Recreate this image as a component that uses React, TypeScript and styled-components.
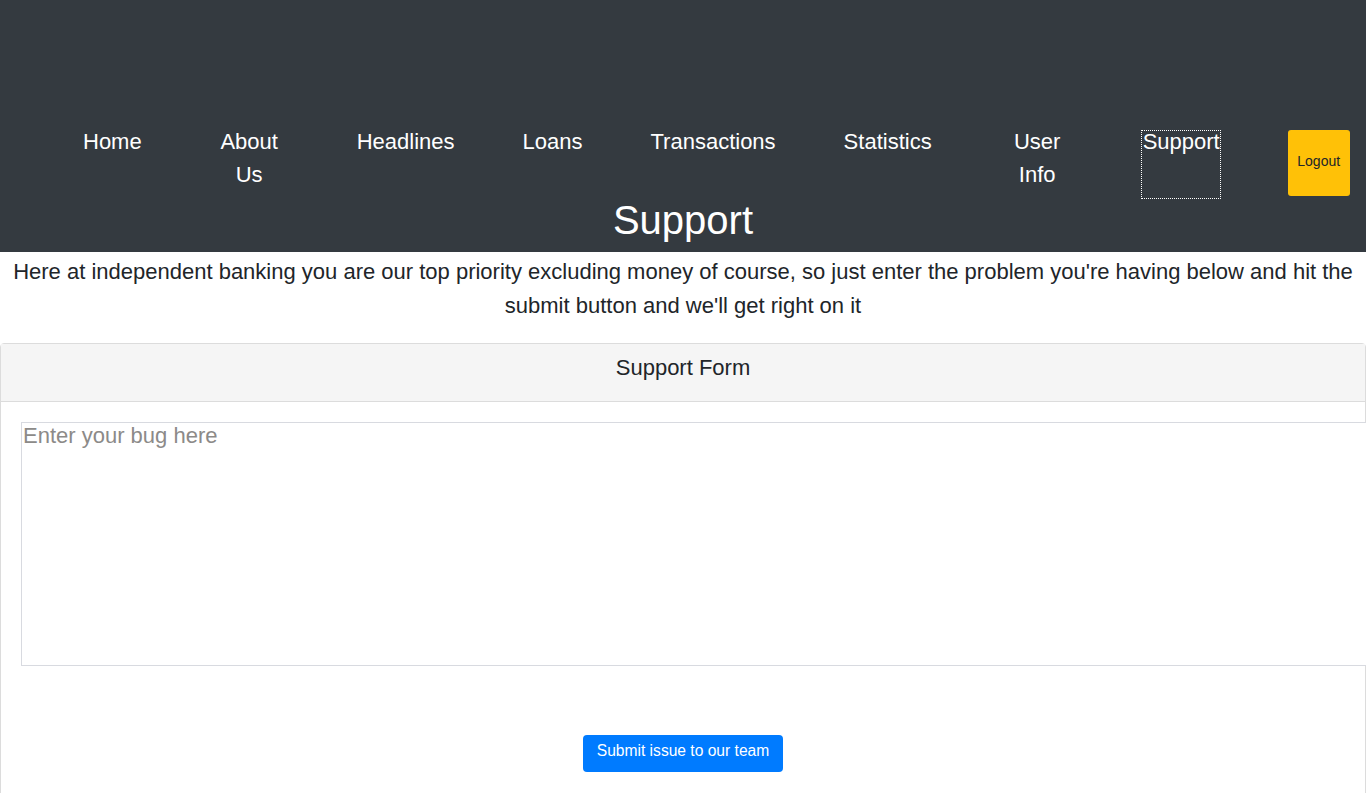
import React from "react";
import styled, { createGlobalStyle } from "styled-components";

const Global = createGlobalStyle`
  html, body { margin: 0; padding: 0; overflow-x: hidden; }
  body {
    font-family: "Liberation Sans", Arial, sans-serif;
    color: #212529;
    background: #fff;
  }
  * { box-sizing: border-box; }
`;

const Header = styled.header`
  background: #343a40;
  color: #fff;
  padding-top: 130px;
`;

const Nav = styled.nav`
  display: flex;
  align-items: flex-start;
  gap: 68px;
  padding-left: 83px;
  height: 66px;
`;

const NavLink = styled.a<{ $w?: number; $focused?: boolean }>`
  position: relative;
  display: block;
  margin-top: -5px;
  width: ${(p) => (p.$w ? `${p.$w}px` : "auto")};
  flex-shrink: 0;
  font-size: 22px;
  line-height: 33px;
  text-align: center;
  color: #fff;
  text-decoration: none;
  white-space: ${(p) => (p.$w ? "normal" : "nowrap")};
  ${(p) =>
    p.$focused &&
    `
    &::after {
      content: "";
      position: absolute;
      left: -2px;
      right: -1px;
      top: 5px;
      height: 67px;
      border: 1px dotted #fff;
    }
  `}
`;

const LogoutButton = styled.button`
  flex-shrink: 0;
  width: 62px;
  height: 66px;
  padding: 0 0 4px;
  background: #ffc107;
  color: #212529;
  border: none;
  border-radius: 3px;
  font-family: inherit;
  font-size: 14px;
`;

const Title = styled.h1`
  margin: 0;
  padding-bottom: 8px;
  font-size: 40px;
  line-height: 48px;
  font-weight: 400;
  text-align: center;
`;

const Intro = styled.p`
  margin: 3px 0 20px;
  padding: 0 8px;
  font-size: 22px;
  line-height: 34px;
  text-align: center;
`;

const Card = styled.section`
  border: 1px solid #dcdcdc;
  border-radius: 4px;
`;

const CardHeader = styled.div`
  background: #f5f5f5;
  border-bottom: 1px solid #dcdcdc;
  padding: 7px 20px 17px;
  font-size: 22px;
  line-height: 33px;
  text-align: center;
`;

const CardBody = styled.div`
  padding: 20px 20px 48px;
  display: flex;
  flex-direction: column;
  align-items: flex-start;
`;

const BugInput = styled.textarea`
  width: 1400px;
  height: 244px;
  margin: 0;
  padding: 0 1px 2px;
  border: 1px solid #d8dae0;
  resize: none;
  font-family: inherit;
  font-size: 22px;
  line-height: 26px;
  color: #212529;
  background: #fff;
  &::placeholder { color: #8c8a88; }
`;

const SubmitButton = styled.button`
  align-self: center;
  margin-top: 69px;
  height: 37px;
  padding: 0 14px 5px;
  background: #007bff;
  color: #fff;
  border: none;
  border-radius: 4px;
  font-family: inherit;
  font-size: 15.6px;
`;

const items: { label: string; w?: number }[] = [
  { label: "Home" },
  { label: "About Us", w: 79 },
  { label: "Headlines" },
  { label: "Loans" },
  { label: "Transactions" },
  { label: "Statistics" },
  { label: "User Info", w: 75 },
  { label: "Support" },
];

export default function App() {
  return (
    <>
      <Global />
      <Header>
        <Nav>
          {items.map((it) => (
            <NavLink key={it.label} href="#" $w={it.w} $focused={it.label === "Support"}>
              {it.label}
            </NavLink>
          ))}
          <LogoutButton>Logout</LogoutButton>
        </Nav>
        <Title>Support</Title>
      </Header>
      <Intro>
        Here at independent banking you are our top priority excluding money of course, so just enter the
        problem you're having below and hit the submit button and we'll get right on it
      </Intro>
      <Card>
        <CardHeader>Support Form</CardHeader>
        <CardBody>
          <BugInput placeholder="Enter your bug here" />
          <SubmitButton>Submit issue to our team</SubmitButton>
        </CardBody>
      </Card>
    </>
  );
}
